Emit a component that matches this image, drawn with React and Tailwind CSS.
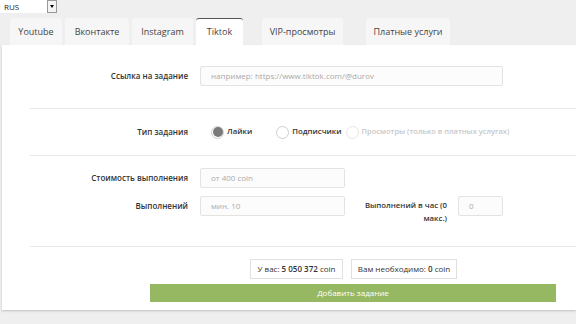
import React from 'react';

const tabs = [
    { name: 'Youtube', cls: 'ml-[10px] w-[52px]' },
    { name: 'Вконтакте', cls: 'ml-[3px] w-[64px]' },
    { name: 'Instagram', cls: 'ml-[3px] w-[61px]' },
    { name: 'Tiktok', cls: 'ml-[3px] w-[47px]', active: true },
    { name: 'VIP-просмотры', cls: 'ml-[19px] w-[81px]' },
    { name: 'Платные услуги', cls: 'ml-[23px] w-[84px]' },
];

function Radio({ checked, disabled, label }) {
    return (
        <label className="flex items-center gap-[3px]">
            <span
                className={`flex h-[13px] w-[13px] items-center justify-center rounded-full border ${
                    disabled ? 'border-[#e6e6e6]' : 'border-[#cfcfcf]'
                } bg-white`}
            >
                {checked && <span className="h-[10px] w-[10px] rounded-full bg-[#7a7a7a]" />}
            </span>
            <span className={`font-semibold ${disabled ? 'text-[7.5px] text-[#c8c8c8]' : 'text-[7.8px] text-[#333]'}`}>{label}</span>
        </label>
    );
}

function Field({ placeholder, className }) {
    return (
        <div
            className={`flex h-[20px] items-center rounded-[2px] border border-[#e3e3e3] bg-[#fcfcfc] px-[10px] text-[8px] text-[#aaa] ${className}`}
        >
            {placeholder}
        </div>
    );
}

export default function App() {
    return (
        <div className="h-[324px] w-[576px] overflow-hidden bg-[#efefef]" style={{ fontFamily: '"Open Sans", "Liberation Sans", sans-serif' }}>
            {/* Language select */}
            <div className="flex h-[13px] items-stretch">
                <div className="flex w-[47px] items-center bg-white pl-[4px] text-[8px] text-[#222]">RUS</div>
                <div className="flex w-[10px] items-center justify-center border border-[#999] bg-[#f4f4f4]">
                    <span className="h-0 w-0 border-x-[2.5px] border-t-[3px] border-x-transparent border-t-black" />
                </div>
            </div>

            {/* Tabs */}
            <div className="mt-[5px] flex h-[27px] items-end">
                {tabs.map((t) => (
                    <div
                        key={t.name}
                        className={`flex h-[27px] items-center justify-center rounded-t-[3px] text-[9px] text-[#444] ${t.cls} ${
                            t.active ? 'border-t border-[#555] bg-white' : 'bg-[#f6f6f6]'
                        }`}
                    >
                        {t.name}
                    </div>
                ))}
            </div>

            {/* Panel */}
            <div className="ml-[2px] h-[265px] bg-white shadow-[0_1px_2px_rgba(0,0,0,0.2)]">
                <div className="flex items-center pt-[21px] pb-[22px]">
                    <div className="w-[186px] text-right text-[8px] font-semibold text-[#333]">Ссылка на задание</div>
                    <Field className="ml-[12px] w-[303px]" placeholder="например: https://www.tiktok.com/@durov" />
                </div>
                <div className="ml-[28px] border-t border-[#e8e8e8]" />

                <div className="flex h-[46px] items-center">
                    <div className="w-[186px] text-right text-[8px] font-semibold text-[#333]">Тип задания</div>
                    <div className="ml-[23px] flex items-center">
                        <Radio checked label="Лайки" />
                        <div className="ml-[24px]">
                            <Radio label="Подписчики" />
                        </div>
                        <div className="ml-[4px]">
                            <Radio disabled label="Просмотры (только в платных услугах)" />
                        </div>
                    </div>
                </div>
                <div className="ml-[28px] border-t border-[#e8e8e8]" />

                <div className="flex flex-col gap-[8px] pt-[12px] pb-[21px]">
                    <div className="flex items-center">
                        <div className="w-[186px] text-right text-[8px] font-semibold text-[#333]">Стоимость выполнения</div>
                        <Field className="ml-[12px] w-[145px]" placeholder="от 400 coin" />
                    </div>
                    <div className="flex items-start">
                        <div className="flex h-[20px] w-[186px] items-center justify-end text-[8px] font-semibold text-[#333]">Выполнений</div>
                        <Field className="ml-[12px] w-[145px]" placeholder="мин. 10" />
                        <div className="ml-[10px] w-[92px] pt-[3px] text-right text-[7.8px] leading-[13px] font-semibold text-[#333]">
                            Выполнений в час (0 макс.)
                        </div>
                        <Field className="ml-[11px] w-[45px]" placeholder="0" />
                    </div>
                </div>
                <div className="ml-[28px] border-t border-[#e8e8e8]" />

                <div className="mt-[12px] ml-[248px] flex gap-[8px]">
                    <div className="flex h-[20px] w-[93px] shrink-0 items-center justify-center border border-[#e0e0e0] text-[8px] text-[#333]">
                        У вас:&nbsp;<span className="font-semibold">5 050 372</span>&nbsp;coin
                    </div>
                    <div className="flex h-[20px] w-[106px] shrink-0 items-center justify-center border border-[#e0e0e0] text-[8px] text-[#333]">
                        Вам необходимо:&nbsp;<span className="font-semibold">0</span>&nbsp;coin
                    </div>
                </div>
                <div className="mt-[5px] ml-[148px] flex h-[18px] w-[406px] items-center justify-center bg-[#97b862] text-[8px] text-white">
                    Добавить задание
                </div>
            </div>
        </div>
    );
}
